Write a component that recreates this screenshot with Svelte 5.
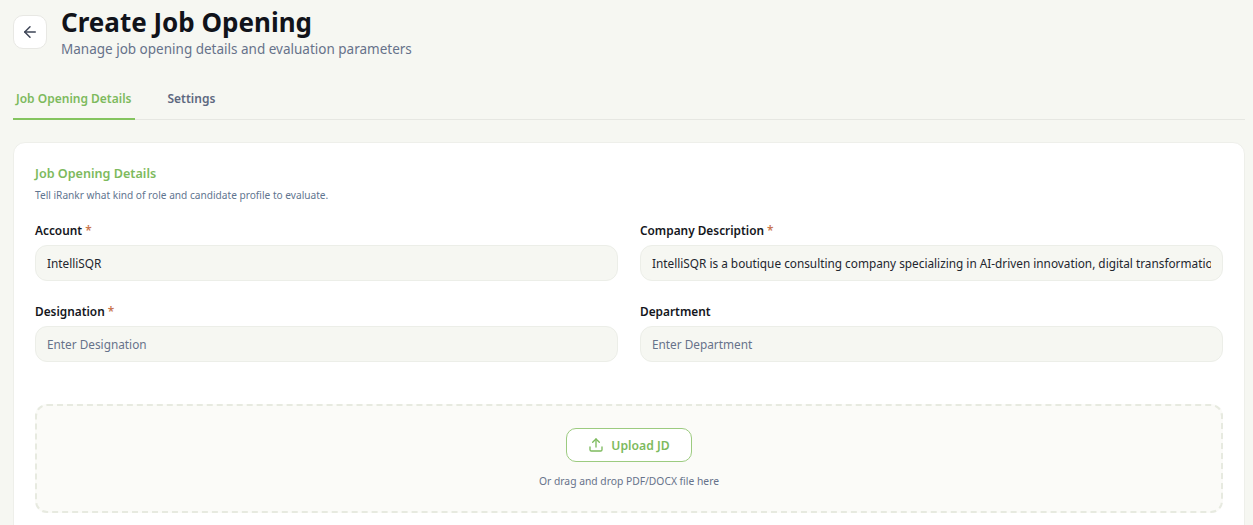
<script>
  let account = "IntelliSQR";
  let description = "IntelliSQR is a boutique consulting company specializing in AI-driven innovation, digital transformation and data strategy for enterprises.";
  let designation = "";
  let department = "";
  let tab = "details";
</script>

<style>
  :global(body) {
    background: #f6f7f2;
    font-family: "Noto Sans", "Open Sans", Arial, sans-serif;
    margin: 0;
    overflow: hidden;
  }
  .page {
    padding: 0 8px 0 13px;
    height: 525px;
    overflow: hidden;
    box-sizing: border-box;
  }
  .header {
    display: flex;
    align-items: flex-start;
    gap: 14px;
    height: 85px;
  }
  .back {
    width: 34px;
    height: 34px;
    margin-top: 15px;
    padding: 0;
    background: #fff;
    border: 1px solid #e8e8e4;
    border-radius: 10px;
    display: flex;
    align-items: center;
    justify-content: center;
    color: #3d4456;
    box-sizing: border-box;
  }
  .title {
    margin: 3px 0 0;
    font-size: 26px;
    line-height: 38px;
    font-weight: 700;
    color: #11131a;
  }
  .subtitle {
    margin: -2px 0 0;
    font-size: 13.5px;
    line-height: 20px;
    color: #66728a;
  }
  .tabs {
    display: flex;
    border-bottom: 1px solid #e6e7e2;
    height: 34px;
    margin-bottom: 22px;
  }
  .tab {
    background: none;
    border: none;
    border-bottom: 2px solid transparent;
    margin-bottom: -1px;
    padding: 0 3px 7px;
    font-family: inherit;
    font-size: 12px;
    font-weight: 600;
    color: #5d6880;
    margin-right: 29px;
    height: 35px;
    box-sizing: border-box;
  }
  .tab.active {
    color: #7dba5d;
    border-bottom-color: #84c45f;
    padding-right: 4px;
  }
  .card {
    background: #fff;
    border: 1px solid #eeefea;
    border-radius: 12px;
    padding: 21px 21px 10px;
    height: 400px;
    box-sizing: border-box;
  }
  .card h2 {
    margin: 0;
    font-size: 12.6px;
    line-height: 20px;
    font-weight: 600;
    color: #7dba5d;
  }
  .hint {
    margin: 4px 0 0;
    font-size: 10.15px;
    line-height: 14px;
    color: #5f7590;
  }
  .grid {
    display: grid;
    grid-template-columns: 1fr 1fr;
    column-gap: 22px;
    row-gap: 22px;
    margin-top: 20px;
  }
  .field label {
    display: block;
    font-size: 11.85px;
    line-height: 16px;
    font-weight: 600;
    color: #14161c;
    margin-bottom: 7px;
  }
  .req {
    color: #c9764f;
  }
  .field input {
    width: 100%;
    height: 36px;
    box-sizing: border-box;
    background: #f6f7f2;
    border: 1px solid #eceee8;
    border-radius: 12px;
    padding: 0 11px;
    font-family: inherit;
    font-size: 11.8px;
    color: #23262e;
    outline: none;
  }
  .field input::placeholder {
    color: #66728a;
    opacity: 1;
  }
  .upload {
    margin-top: 42px;
    height: 109px;
    border: 2px dashed #e7eae0;
    border-radius: 12px;
    background: #fbfbf8;
    box-sizing: border-box;
    display: flex;
    flex-direction: column;
    align-items: center;
    padding-top: 22px;
  }
  .upload-btn {
    width: 126px;
    height: 34px;
    background: #fff;
    border: 1px solid #9ccb80;
    border-radius: 10px;
    display: flex;
    align-items: center;
    justify-content: center;
    gap: 7px;
    font-family: inherit;
    font-size: 12.2px;
    font-weight: 600;
    color: #7dba5d;
    padding: 0;
  }
  .upload p {
    margin: 11px 0 0;
    font-size: 10.3px;
    line-height: 16px;
    color: #66728a;
  }
</style>

<div class="page">
  <div class="header">
    <button class="back" aria-label="Back">
      <svg width="18" height="18" viewBox="0 0 24 24" fill="none" stroke="currentColor" stroke-width="2" stroke-linecap="round" stroke-linejoin="round">
        <path d="M19 12H5" />
        <path d="M12 19l-7-7 7-7" />
      </svg>
    </button>
    <div>
      <h1 class="title">Create Job Opening</h1>
      <p class="subtitle">Manage job opening details and evaluation parameters</p>
    </div>
  </div>

  <div class="tabs">
    <button class="tab" class:active={tab === "details"} on:click={() => (tab = "details")}>Job Opening Details</button>
    <button class="tab" class:active={tab === "settings"} on:click={() => (tab = "settings")}>Settings</button>
  </div>

  <div class="card">
    <h2>Job Opening Details</h2>
    <p class="hint">Tell iRankr what kind of role and candidate profile to evaluate.</p>

    <div class="grid">
      <div class="field">
        <label for="account">Account <span class="req">*</span></label>
        <input id="account" bind:value={account} />
      </div>
      <div class="field">
        <label for="description">Company Description <span class="req">*</span></label>
        <input id="description" bind:value={description} />
      </div>
      <div class="field">
        <label for="designation">Designation <span class="req">*</span></label>
        <input id="designation" placeholder="Enter Designation" bind:value={designation} />
      </div>
      <div class="field">
        <label for="department">Department</label>
        <input id="department" placeholder="Enter Department" bind:value={department} />
      </div>
    </div>

    <div class="upload">
      <button class="upload-btn">
        <svg width="16" height="16" viewBox="0 0 24 24" fill="none" stroke="currentColor" stroke-width="2" stroke-linecap="round" stroke-linejoin="round">
          <path d="M21 15v4a2 2 0 0 1-2 2H5a2 2 0 0 1-2-2v-4" />
          <path d="M17 8l-5-5-5 5" />
          <path d="M12 3v12" />
        </svg>
        Upload JD
      </button>
      <p>Or drag and drop PDF/DOCX file here</p>
    </div>
  </div>
</div>
